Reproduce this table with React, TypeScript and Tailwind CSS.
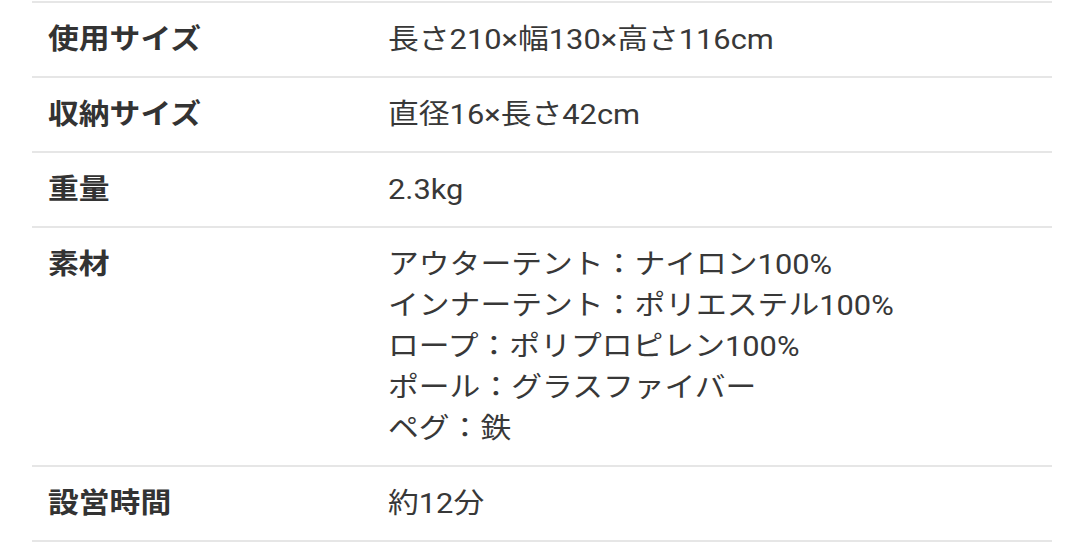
const specs: { label: string; value: string[] }[] = [
  { label: '使用サイズ', value: ['長さ210×幅130×高さ116cm'] },
  { label: '収納サイズ', value: ['直径16×長さ42cm'] },
  { label: '重量', value: ['2.3kg'] },
  {
    label: '素材',
    value: [
      'アウターテント：ナイロン100%',
      'インナーテント：ポリエステル100%',
      'ロープ：ポリプロピレン100%',
      'ポール：グラスファイバー',
      'ペグ：鉄',
    ],
  },
  { label: '設営時間', value: ['約12分'] },
];

export default function App() {
  return (
    <div
      className="w-[1080px] h-[552px] overflow-hidden bg-white pt-px"
      style={{ fontFamily: 'Roboto, "Noto Sans CJK JP", sans-serif' }}
    >
      <div className="ml-[32px] w-[1020px] border-t-2 border-[#e6e6e6]">
        {specs.map((spec) => (
          <div key={spec.label} className="flex border-b-2 border-[#e6e6e6] py-4 pl-4">
            <div className="w-[340px] shrink-0 text-[28px] leading-[41px] font-bold text-[#333333] origin-left scale-x-[1.1]">
              {spec.label}
            </div>
            <div className="flex-1 text-[28px] leading-[41px] text-[#383838] origin-left scale-x-[1.1]">
              {spec.value.map((line) => (
                <div key={line}>{line}</div>
              ))}
            </div>
          </div>
        ))}
      </div>
    </div>
  );
}
